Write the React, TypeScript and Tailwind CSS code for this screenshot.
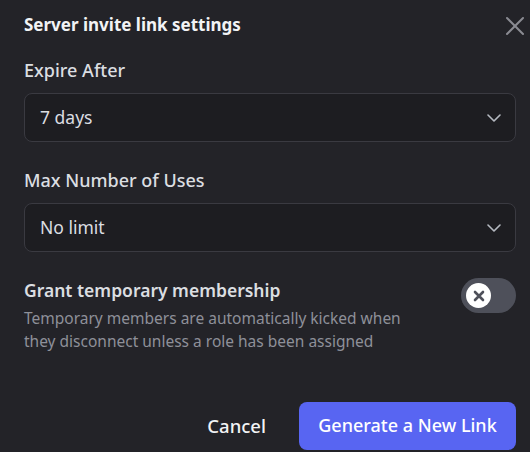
import { X } from "lucide-react";

const font = { fontFamily: '"Noto Sans", "Open Sans", sans-serif' };

function Select({ value }: { value: string }) {
  return (
    <div className="flex h-[49px] items-center justify-between rounded-lg border border-[#3a3a41] bg-[#1d1d21] pl-[15px] pr-[14px]">
      <span className="text-[17.5px] text-[#dbdee1]">{value}</span>
      <svg width="14" height="8" viewBox="0 0 14 8" fill="none" className="text-[#b5bac1]">
        <path d="M1 1l6 6 6-6" stroke="currentColor" strokeWidth="1.6" strokeLinecap="round" strokeLinejoin="round" />
      </svg>
    </div>
  );
}

export default function App() {
  return (
    <div className="h-[452px] w-[530px] overflow-hidden bg-[#232328]" style={font}>
      <div className="flex h-[50px] items-center justify-between pl-6 pr-[5px]">
        <h1 className="text-[17px] font-bold text-[#f2f3f5]">Server invite link settings</h1>
        <svg width="20" height="20" viewBox="0 0 20 20" fill="none" className="mt-[2px] text-[#8a8b92]">
          <path d="M2 2l16 16M18 2L2 18" stroke="currentColor" strokeWidth="2" strokeLinecap="round" />
        </svg>
      </div>

      <div className="pl-6 pr-[14px]">
        <div className="mt-2 flex h-6 items-center text-[18px] font-medium text-[#dbdee1]">Expire After</div>
        <div className="mt-[11px]">
          <Select value="7 days" />
        </div>

        <div className="mt-[26px] flex h-6 items-center text-[18px] font-medium text-[#dbdee1]">Max Number of Uses</div>
        <div className="mt-[11px]">
          <Select value="No limit" />
        </div>

        <div className="mt-[26px] flex justify-between">
          <div>
            <div className="flex h-6 items-center text-[17.5px] font-semibold text-[#dbdee1]">Grant temporary membership</div>
            <p className="mt-[5px] w-[395px] text-[15.5px] leading-[23px] text-[#8e9099]">
              Temporary members are automatically kicked when they disconnect unless a role has been assigned
            </p>
          </div>
          <div className="flex h-[35px] w-[55px] items-center rounded-full bg-[#4e505a] px-[5px]">
            <div className="flex h-[25px] w-[25px] items-center justify-center rounded-full bg-white">
              <svg width="12" height="12" viewBox="0 0 12 12" fill="none" className="text-[#4e505a]">
                <path d="M2 2l8 8M10 2L2 10" stroke="currentColor" strokeWidth="2.6" strokeLinecap="round" />
              </svg>
            </div>
          </div>
        </div>

        <div className="mt-[49px] flex items-center justify-end gap-[33px]">
          <span className="text-[18.5px] font-medium text-[#f2f3f5]">Cancel</span>
          <div className="flex h-[48px] w-[217px] items-center justify-center rounded-lg bg-[#5865f2] pb-[2px] text-[18px] font-medium text-white">
            Generate a New Link
          </div>
        </div>
      </div>
    </div>
  );
}
